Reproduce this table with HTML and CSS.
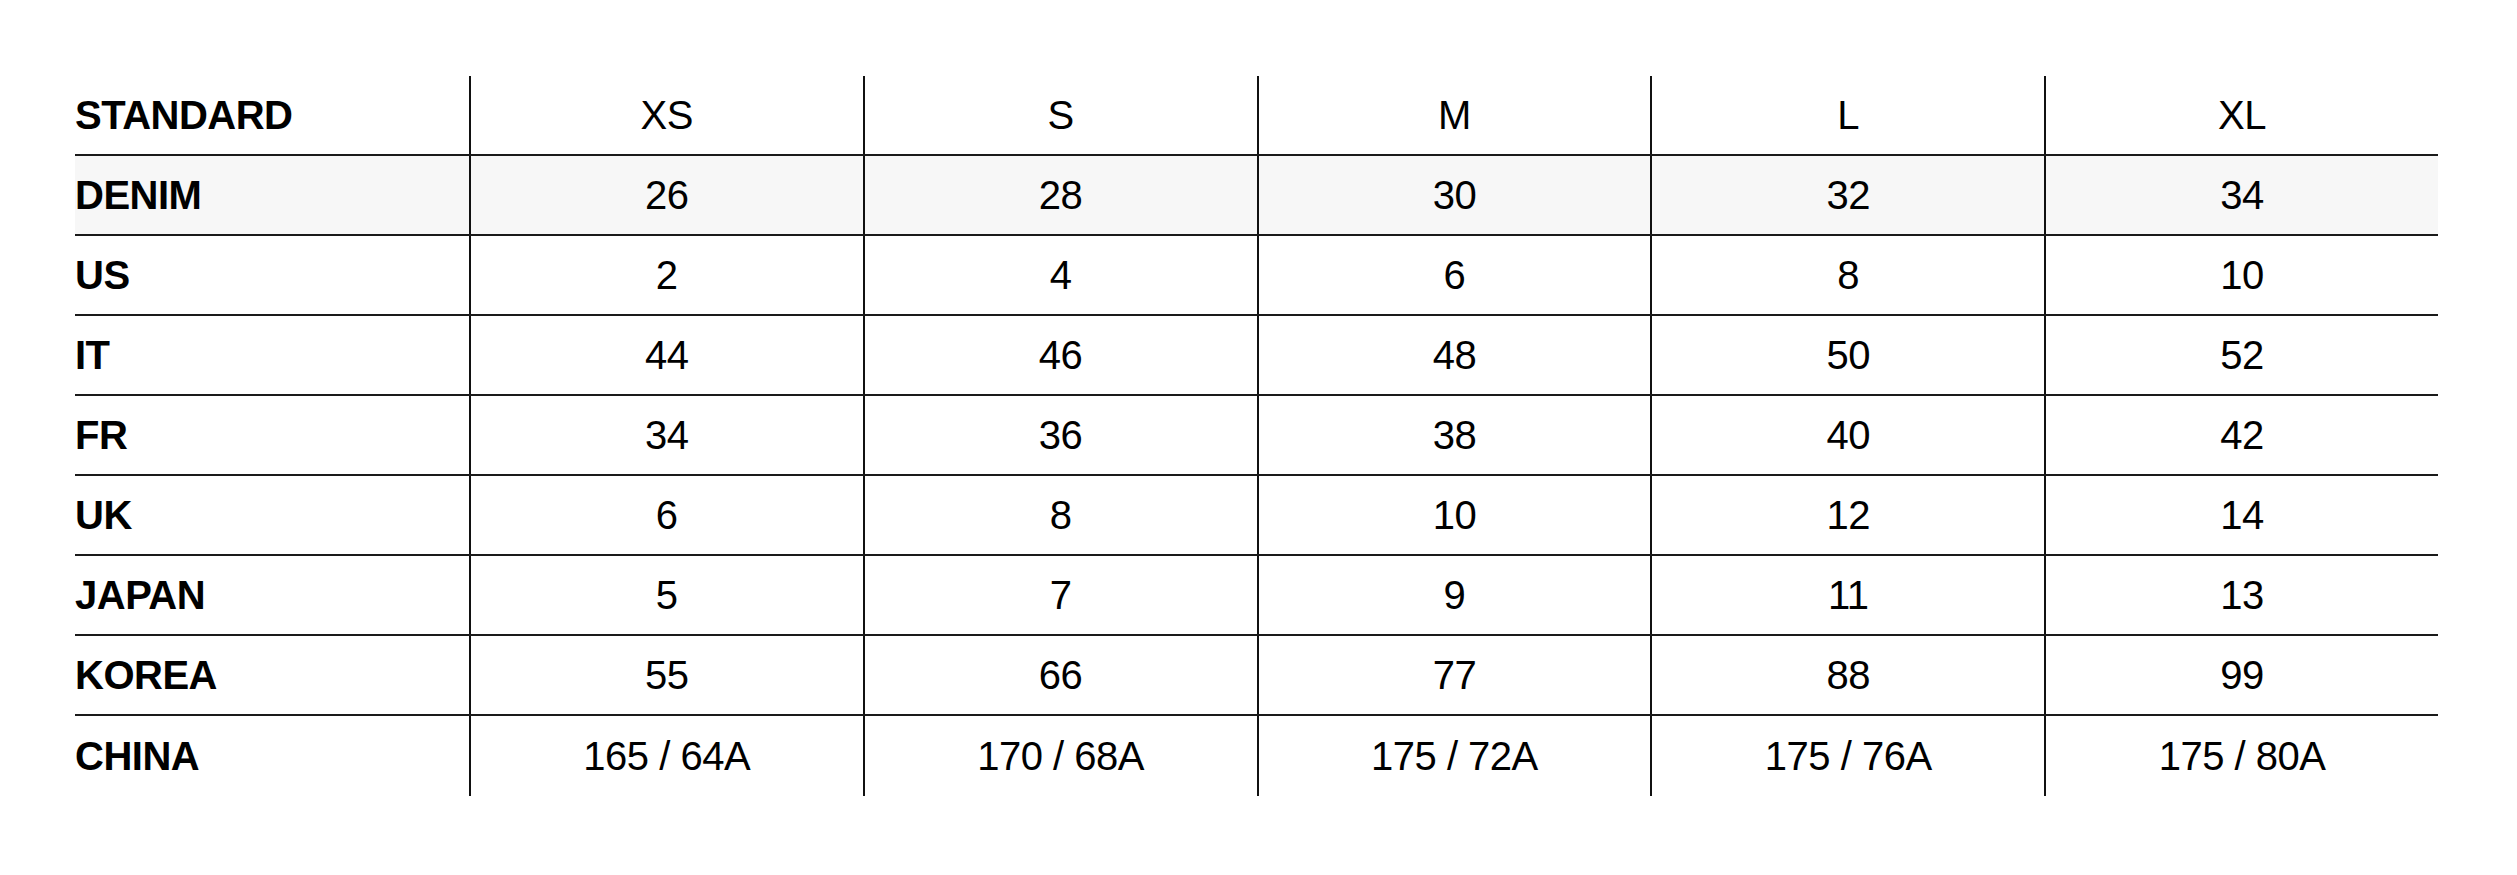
FILE: index.html
```html
<!DOCTYPE html>
<html lang="en">
<head>
<meta charset="utf-8">
<title>Size Chart</title>
<link rel="stylesheet" href="styles.css">
</head>
<body>
<div class="chart">
  <div class="row head">
    <div class="cell label">STANDARD</div>
    <div class="cell">XS</div>
    <div class="cell">S</div>
    <div class="cell">M</div>
    <div class="cell">L</div>
    <div class="cell">XL</div>
  </div>
  <div class="row shaded">
    <div class="cell label">DENIM</div>
    <div class="cell">26</div>
    <div class="cell">28</div>
    <div class="cell">30</div>
    <div class="cell">32</div>
    <div class="cell">34</div>
  </div>
  <div class="row">
    <div class="cell label">US</div>
    <div class="cell">2</div>
    <div class="cell">4</div>
    <div class="cell">6</div>
    <div class="cell">8</div>
    <div class="cell">10</div>
  </div>
  <div class="row">
    <div class="cell label">IT</div>
    <div class="cell">44</div>
    <div class="cell">46</div>
    <div class="cell">48</div>
    <div class="cell">50</div>
    <div class="cell">52</div>
  </div>
  <div class="row">
    <div class="cell label">FR</div>
    <div class="cell">34</div>
    <div class="cell">36</div>
    <div class="cell">38</div>
    <div class="cell">40</div>
    <div class="cell">42</div>
  </div>
  <div class="row">
    <div class="cell label">UK</div>
    <div class="cell">6</div>
    <div class="cell">8</div>
    <div class="cell">10</div>
    <div class="cell">12</div>
    <div class="cell">14</div>
  </div>
  <div class="row">
    <div class="cell label">JAPAN</div>
    <div class="cell">5</div>
    <div class="cell">7</div>
    <div class="cell">9</div>
    <div class="cell">11</div>
    <div class="cell">13</div>
  </div>
  <div class="row">
    <div class="cell label">KOREA</div>
    <div class="cell">55</div>
    <div class="cell">66</div>
    <div class="cell">77</div>
    <div class="cell">88</div>
    <div class="cell">99</div>
  </div>
  <div class="row">
    <div class="cell label">CHINA</div>
    <div class="cell">165 / 64A</div>
    <div class="cell">170 / 68A</div>
    <div class="cell">175 / 72A</div>
    <div class="cell">175 / 76A</div>
    <div class="cell">175 / 80A</div>
  </div>
</div>
</body>
</html>
```

FILE: styles.css
```css
html, body {
  margin: 0;
  padding: 0;
  background: #ffffff;
}

body {
  font-family: "Liberation Sans", Arial, sans-serif;
  color: #000000;
  padding: 76px 79px 0 75px;
}

.chart {
  width: 2363px;
}

.row {
  display: grid;
  grid-template-columns: repeat(6, 1fr);
  height: 80px;
  box-sizing: border-box;
  border-bottom: 2px solid #1a1a1a;
}

.row:last-child {
  border-bottom: none;
}

.row.shaded {
  background: #f7f7f7;
}

.cell {
  display: flex;
  align-items: center;
  justify-content: center;
  font-size: 40px;
  font-weight: 400;
  letter-spacing: -0.5px;
  border-left: 2px solid #111111;
}

.cell.label {
  justify-content: flex-start;
  font-weight: 700;
  border-left: none;
}
```
